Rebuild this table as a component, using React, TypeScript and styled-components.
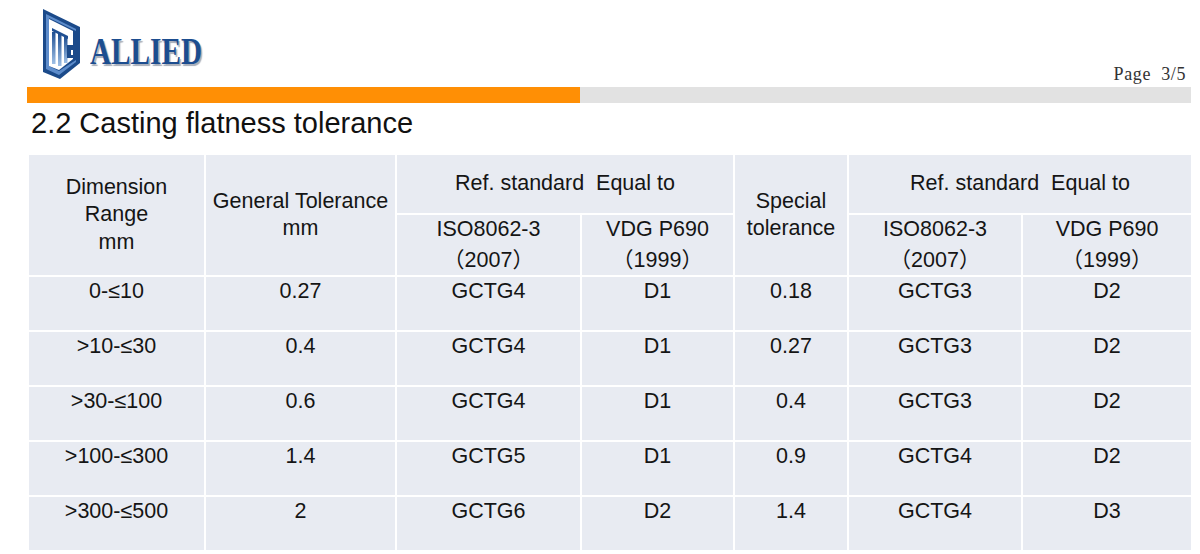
import styled, { createGlobalStyle } from "styled-components";

const GlobalStyle = createGlobalStyle`
  html, body {
    margin: 0;
    padding: 0;
    background: #fff;
  }
  body {
    font-family: "Liberation Sans", Arial, "Noto Sans CJK SC", sans-serif;
    color: #111;
  }
`

const Page = styled.div`
  width: 1200px;
  height: 554px;
  box-sizing: border-box;
  padding: 0 9px 0 27px;
  overflow: hidden;
`

const Header = styled.header`
  height: 87px;
  display: flex;
  justify-content: space-between;
  padding: 0 5px 0 13px;
  box-sizing: border-box;
`

const Logo = styled.div`
  display: flex;
  align-items: center;
  padding-top: 8px;
  height: 72px;
`

const LogoText = styled.span`
  font-family: "Liberation Serif", "Times New Roman", serif;
  font-weight: 700;
  font-size: 37px;
  line-height: 1;
  color: #1c4d8f;
  text-shadow: 2px 2px 1px #a7adb8;
  transform: scaleX(0.79);
  transform-origin: left center;
  margin-left: 6px;
  margin-top: 14px;
`

const PageNo = styled.span`
  align-self: flex-end;
  font-family: "Liberation Serif", "Times New Roman", serif;
  font-size: 18px;
  letter-spacing: 0.6px;
  color: #333;
  white-space: pre;
  margin-bottom: 2px;
`

// ? 주황 / 회색 구분 막대
const Bar = styled.div`
  height: 16px;
  display: grid;
  grid-template-columns: 553px 1fr;

  & span:first-child {
    background: #ff8f05;
  }
  & span:last-child {
    background: #e2e2e2;
  }
`

const Title = styled.h2`
  margin: 4px 0 0;
  padding-left: 4px;
  font-size: 29px;
  font-weight: 400;
  line-height: 33px;
  color: #111;
`

const Table = styled.table`
  margin-top: 13px;
  width: 1164px;
  border-collapse: collapse;
  table-layout: fixed;

  & td {
    border: 2px solid #fff;
    background: #e8ebf2;
    text-align: center;
    font-size: 21.5px;
    line-height: 27.5px;
    color: #151515;
    padding: 0;
    white-space: pre-line;
  }
`

const HeadRow = styled.tr<{ $h: number }>`
  height: ${(p) => p.$h}px;
  & td {
    vertical-align: middle;
  }
`

const DataRow = styled.tr`
  height: 55px;
  & td {
    vertical-align: top;
    padding-top: 1px;
  }
`

const Paren = styled.span`
  font-family: "Noto Sans CJK SC", sans-serif;
`

const LogoMark = () => (
  <svg width="44" height="72" viewBox="0 0 44 72">
    <defs>
      <linearGradient id="barg" x1="0" y1="0" x2="0" y2="1">
        <stop offset="0" stopColor="#1f4f92" />
        <stop offset="1" stopColor="#9fc0e6" />
      </linearGradient>
    </defs>
    <polygon points="3,1 40,19 40,55 20,71 3,64" fill="#1b4a8a" />
    <polygon points="6,6 36,21 36,23 9,10 9,58 19,63 36,52 36,54 19,67 6,61" fill="#5d8ccb" />
    <polygon points="9,11 33,23 33,51 19,62 9,58" fill="#fff" />
    <rect x="12" y="24" width="3.5" height="32" fill="url(#barg)" />
    <rect x="18" y="26" width="3.5" height="32" fill="url(#barg)" />
    <rect x="24" y="29" width="3.5" height="26" fill="url(#barg)" />
    <polygon points="12,20 28,28 28,31 12,23" fill="#1f4f92" />
    <polygon points="27,37 40,37 40,42 31,42 31,47 40,47 40,50 27,50" fill="#1b4a8a" />
  </svg>
)

const rows = [
  ["0-≤10", "0.27", "GCTG4", "D1", "0.18", "GCTG3", "D2"],
  [">10-≤30", "0.4", "GCTG4", "D1", "0.27", "GCTG3", "D2"],
  [">30-≤100", "0.6", "GCTG4", "D1", "0.4", "GCTG3", "D2"],
  [">100-≤300", "1.4", "GCTG5", "D1", "0.9", "GCTG4", "D2"],
  [">300-≤500", "2", "GCTG6", "D2", "1.4", "GCTG4", "D3"],
]

const widths = [177, 191, 185, 153, 114, 174, 170]

const App: React.FC = () => {
  return (
    <>
      <GlobalStyle />
      <Page>
        <Header>
          <Logo>
            <LogoMark />
            <LogoText>ALLIED</LogoText>
          </Logo>
          <PageNo>{"Page  3/5"}</PageNo>
        </Header>
        <Bar>
          <span />
          <span />
        </Bar>
        <Title>2.2 Casting flatness tolerance</Title>
        <Table>
          <colgroup>
            {widths.map((w, i) => (
              <col key={i} style={{ width: w }} />
            ))}
          </colgroup>
          <tbody>
            <HeadRow $h={60}>
              <td rowSpan={2}>{"Dimension\nRange\nmm"}</td>
              <td rowSpan={2}>{"General Tolerance\nmm"}</td>
              <td colSpan={2}>{"Ref. standard\u00a0 Equal to"}</td>
              <td rowSpan={2}>{"Special\ntolerance"}</td>
              <td colSpan={2}>{"Ref. standard\u00a0 Equal to"}</td>
            </HeadRow>
            <HeadRow $h={62}>
              <td>
                ISO8062-3
                <br />
                <Paren>（</Paren>2007<Paren>）</Paren>
              </td>
              <td>
                VDG P690
                <br />
                <Paren>（</Paren>1999<Paren>）</Paren>
              </td>
              <td>
                ISO8062-3
                <br />
                <Paren>（</Paren>2007<Paren>）</Paren>
              </td>
              <td>
                VDG P690
                <br />
                <Paren>（</Paren>1999<Paren>）</Paren>
              </td>
            </HeadRow>
            {rows.map((r, i) => (
              <DataRow key={i}>
                {r.map((c, j) => (
                  <td key={j}>{c}</td>
                ))}
              </DataRow>
            ))}
          </tbody>
        </Table>
      </Page>
    </>
  )
}

export default App
